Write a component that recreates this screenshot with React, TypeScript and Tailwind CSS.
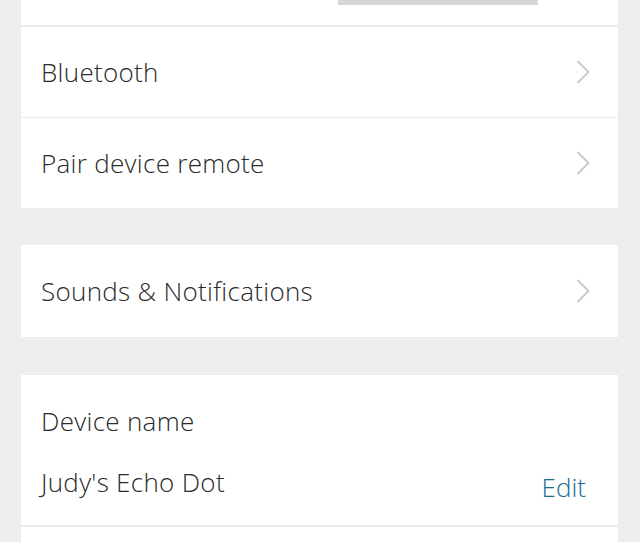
const font = { fontFamily: '"Open Sans", "Liberation Sans", sans-serif' };

function Chevron() {
  return (
    <svg width="14" height="24" viewBox="0 0 14 24" fill="none" className="shrink-0">
      <path d="M2 1.5 L12.5 12 L2 22.5" stroke="#c9c9c9" strokeWidth="1.8" strokeLinecap="round" strokeLinejoin="round" />
    </svg>
  );
}

function NavRow({ label, height = 'h-[90px]' }: { label: string; height?: string }) {
  return (
    <div className={`${height} flex items-center justify-between pl-5 pr-[28px]`}>
      <span className="text-[26px] font-light tracking-[0.3px] text-[#2b2b2b]">{label}</span>
      <Chevron />
    </div>
  );
}

export default function App() {
  return (
    <div className="h-[542px] w-[640px] overflow-hidden bg-[#ededed] pl-[21px] pr-[22px]" style={font}>
      {/* top card, cut off */}
      <div className="h-[25px] bg-white">
        <div className="ml-[317px] h-[5px] w-[200px] bg-[#d6d6d6]" />
      </div>
      <div className="h-[2px] bg-[#ececec]" />
      <div className="bg-white">
        <NavRow label="Bluetooth" />
        <div className="h-[1px] bg-[#ececec]" />
        <NavRow label="Pair device remote" />
      </div>

      <div className="h-[37px]" />
      <div className="bg-white">
        <NavRow label="Sounds & Notifications" height="h-[92px]" />
      </div>

      <div className="h-[38px]" />
      <div className="bg-white">
        <div className="flex h-[92px] items-center pl-5">
          <span className="text-[26px] font-light tracking-[0.3px] text-[#2b2b2b]">Device name</span>
        </div>
        <div className="flex h-[30px] items-center justify-between pl-5 pr-[32px]">
          <span className="text-[26px] font-light tracking-[0.3px] text-[#2b2b2b]">Judy's Echo Dot</span>
          <span className="mt-[10px] text-[26px] font-light text-[#1d6c94]">Edit</span>
        </div>
        <div className="h-[28px]" />
      </div>
      <div className="h-[2px] bg-[#ececec]" />
      <div className="h-[40px] bg-white" />
    </div>
  );
}
